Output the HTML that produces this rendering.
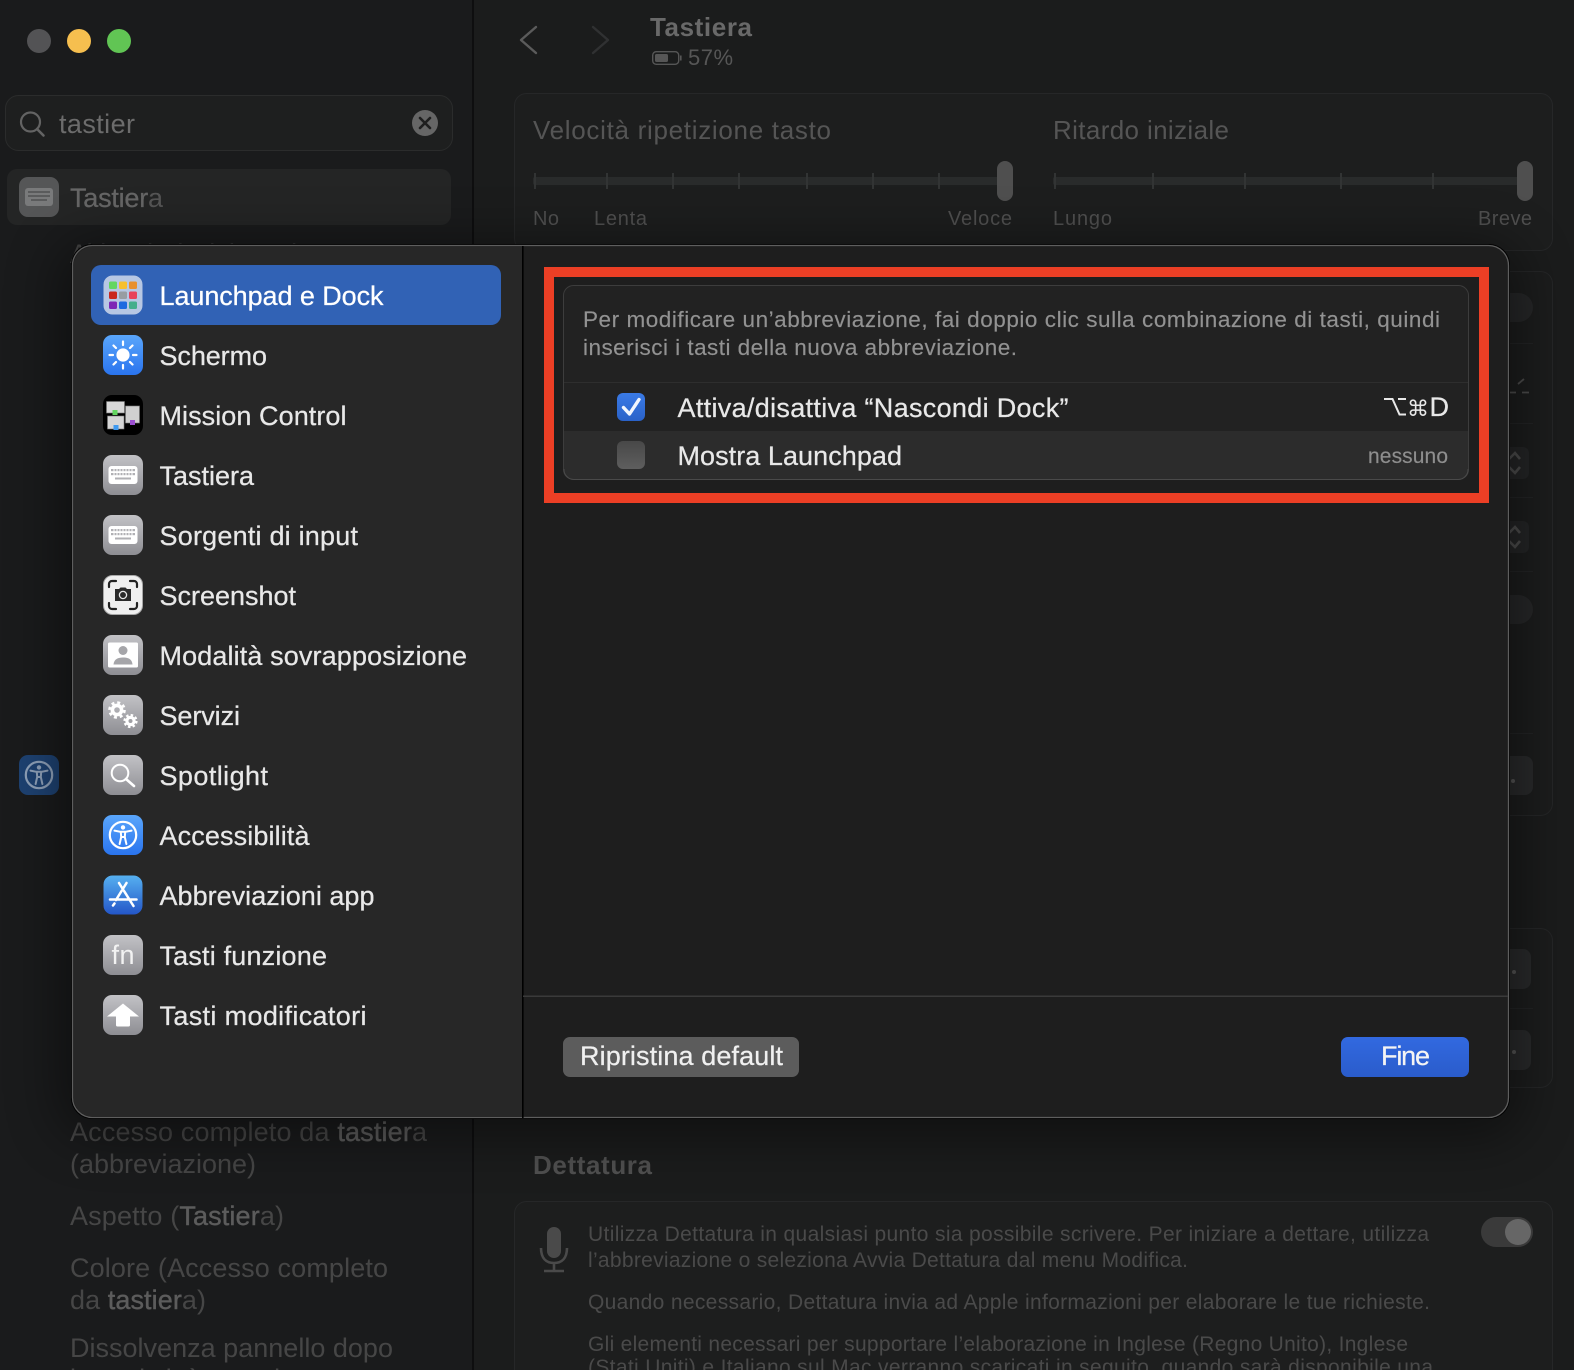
<!DOCTYPE html>
<html lang="it">
<head>
<meta charset="utf-8">
<title>Tastiera</title>
<style>
html,body{margin:0;padding:0;background:#1a1b1c;width:1574px;height:1370px;overflow:hidden}
svg{display:block}
text{font-family:"Liberation Sans",sans-serif;white-space:pre}
.m{font-size:27px;fill:#e8e8e8;stroke:#e8e8e8;stroke-width:.25px}
.s{font-size:27px;fill:#464646}
.b{fill:#5c5c5c;stroke:#5c5c5c;stroke-width:.4px}
.d{font-size:21px;fill:#4a4a4a}
.l{font-size:20px;fill:#505050}
.h{font-size:26px;fill:#555}
</style>
</head>
<body>
<svg xmlns="http://www.w3.org/2000/svg" width="1574" height="1370" viewBox="0 0 1574 1370">
<defs>
<linearGradient id="gray" x1="0" y1="0" x2="0" y2="1"><stop offset="0" stop-color="#c2c2c6"/><stop offset="1" stop-color="#8e8e93"/></linearGradient>
<linearGradient id="blue" x1="0" y1="0" x2="0" y2="1"><stop offset="0" stop-color="#5aa6fb"/><stop offset="1" stop-color="#2a74ee"/></linearGradient>
<linearGradient id="app" x1="0" y1="0" x2="0" y2="1"><stop offset="0" stop-color="#56b0f0"/><stop offset="1" stop-color="#2456c8"/></linearGradient>
<linearGradient id="cb" x1="0" y1="0" x2="0" y2="1"><stop offset="0" stop-color="#3a7ae6"/><stop offset="1" stop-color="#2a62c8"/></linearGradient>
<linearGradient id="cb2" x1="0" y1="0" x2="0" y2="1"><stop offset="0" stop-color="#484848"/><stop offset="1" stop-color="#5e5e5e"/></linearGradient>
<linearGradient id="fine" x1="0" y1="0" x2="0" y2="1"><stop offset="0" stop-color="#3269e0"/><stop offset="1" stop-color="#2a5ccb"/></linearGradient>
<filter id="shadow" x="-10%" y="-10%" width="120%" height="120%"><feGaussianBlur stdDeviation="28"/></filter>
<g id="kbd">
<rect x="5.5" y="11" width="29" height="18" rx="3" fill="#fff"/>
<g fill="#b0b0b4">
<rect x="8" y="14" width="24" height="2.2"/><rect x="8" y="18" width="24" height="2.2"/><rect x="12" y="22.500" width="16" height="2"/>
</g>
<g fill="#fff">
<rect x="10.5" y="13" width="1" height="8"/><rect x="13.5" y="13" width="1" height="8"/><rect x="16.5" y="13" width="1" height="8"/><rect x="19.5" y="13" width="1" height="8"/><rect x="22.5" y="13" width="1" height="8"/><rect x="25.5" y="13" width="1" height="8"/><rect x="28.5" y="13" width="1" height="8"/>
</g>
</g>
<g id="a11y">
<circle cx="20" cy="20" r="13.2" fill="none" stroke="#fff" stroke-width="2.2"/>
<circle cx="20" cy="12.4" r="2.2" fill="#fff"/>
<path d="M11.5 15.6 L17.4 16.8 H22.6 L28.5 15.6 M17.8 17 L18.2 22 L16.6 29 M22.2 17 L21.8 22 L23.4 29 M18.2 22 H21.8" fill="none" stroke="#fff" stroke-width="2" stroke-linecap="round" stroke-linejoin="round"/>
</g>
</defs>

<!-- background window -->
<rect width="1574" height="1370" fill="#1a1b1c"/>
<rect x="472" width="1102" height="1370" fill="#1b1c1c"/>
<rect x="472" y="0" width="2" height="1370" fill="#0e0e0f"/>

<circle cx="39" cy="41" r="12" fill="#535355"/>
<circle cx="79" cy="41" r="12" fill="#f6bf4f"/>
<circle cx="119" cy="41" r="12" fill="#61c554"/>

<rect x="5.5" y="95.5" width="447" height="55" rx="13" fill="#1e1f1f" stroke="#2b2c2c"/>
<circle cx="30.5" cy="122" r="9.5" fill="none" stroke="#636363" stroke-width="2.2"/>
<path d="M37 129 L43.5 135.5" stroke="#636363" stroke-width="2.6" stroke-linecap="round"/>
<text x="59" y="133" font-size="27" fill="#6c6c6c" textLength="76">tastier</text>
<circle cx="425" cy="123" r="13" fill="#666"/>
<path d="M420 118 L430 128 M430 118 L420 128" stroke="#1f1f1f" stroke-width="2.6" stroke-linecap="round"/>

<rect x="7" y="169" width="444" height="56" rx="10" fill="#242525"/>
<rect x="19" y="177" width="40" height="40" rx="9" fill="#555657"/>
<rect x="25" y="188" width="28" height="18" rx="3" fill="#797a7b"/>
<g fill="#5a5b5c"><rect x="28" y="191" width="22" height="2"/><rect x="28" y="195" width="22" height="2"/><rect x="31" y="199" width="16" height="2"/></g>
<text x="70" y="207" class="s" style="fill:#626262" textLength="93"><tspan fill="#666" stroke="#666" stroke-width=".3">Tastier</tspan><tspan fill="#555">a</tspan></text>
<text x="70" y="263" class="s" textLength="262">Abbreviazioni da tastiera</text>

<rect x="19" y="755" width="40" height="40" rx="9" fill="#1e4272"/>
<g transform="translate(19,755)" opacity=".5"><use href="#a11y"/></g>

<text x="70" y="1141" class="s" textLength="357">Accesso completo da <tspan class="b">tastier</tspan>a</text>
<text x="70" y="1173" class="s" textLength="186">(abbreviazione)</text>
<text x="70" y="1225" class="s" textLength="214">Aspetto (<tspan class="b">Tastier</tspan>a)</text>
<text x="70" y="1277" class="s" textLength="318">Colore (Accesso completo</text>
<text x="70" y="1309" class="s" textLength="136">da <tspan class="b">tastier</tspan>a)</text>
<text x="70" y="1357" class="s" textLength="323">Dissolvenza pannello dopo</text>
<text x="70" y="1388" class="s" textLength="260">inattività tastiera</text>

<!-- header -->
<path d="M536 27 L521 40 L536 53" fill="none" stroke="#5b5b5b" stroke-width="2.4" stroke-linejoin="round" stroke-linecap="round"/>
<path d="M593 27 L608 40 L593 53" fill="none" stroke="#303132" stroke-width="2.4" stroke-linejoin="round" stroke-linecap="round"/>
<text x="650" y="36" font-size="26" font-weight="bold" fill="#696969" textLength="102">Tastiera</text>
<rect x="652.7" y="51.7" width="26" height="12.6" rx="3.5" fill="none" stroke="#565656" stroke-width="1.4"/>
<rect x="655" y="54" width="13" height="8" rx="1.6" fill="#565656"/>
<rect x="680" y="55.5" width="1.6" height="5" fill="#565656"/>
<text x="688" y="65" font-size="22" fill="#565656" textLength="45">57%</text>

<!-- top panel -->
<rect x="514.5" y="93.5" width="1038" height="157" rx="12" fill="#1d1e1e" stroke="#262728"/>
<text x="533" y="139" class="h" textLength="298">Velocità ripetizione tasto</text>
<text x="1053" y="139" class="h" textLength="176">Ritardo iniziale</text>
<rect x="533" y="177" width="478" height="8" rx="2" fill="#292b2b"/>
<rect x="1053" y="177" width="478" height="8" rx="2" fill="#292b2b"/>
<g fill="#323434">
<rect x="534" y="173" width="2" height="16"/><rect x="606" y="173" width="2" height="16"/><rect x="672" y="173" width="2" height="16"/><rect x="738" y="173" width="2" height="16"/><rect x="806" y="173" width="2" height="16"/><rect x="872" y="173" width="2" height="16"/><rect x="938" y="173" width="2" height="16"/>
<rect x="1054" y="173" width="2" height="16"/><rect x="1152" y="173" width="2" height="16"/><rect x="1244" y="173" width="2" height="16"/><rect x="1340" y="173" width="2" height="16"/><rect x="1432" y="173" width="2" height="16"/>
</g>
<rect x="997" y="161" width="16" height="40" rx="8" fill="#4f4f4f"/>
<rect x="1517" y="161" width="16" height="40" rx="8" fill="#4f4f4f"/>
<text x="533" y="225" class="l" textLength="26">No</text>
<text x="594" y="225" class="l" textLength="53">Lenta</text>
<text x="948" y="225" class="l" textLength="64">Veloce</text>
<text x="1053" y="225" class="l" textLength="59">Lungo</text>
<text x="1478" y="225" class="l" textLength="54">Breve</text>

<!-- right side panels -->
<rect x="514.5" y="271.5" width="1038" height="544" rx="12" fill="#1c1d1d" stroke="#252627"/>
<g fill="#232425">
<rect x="1500" y="343" width="33" height="1"/><rect x="1500" y="423" width="33" height="1"/><rect x="1500" y="497" width="33" height="1"/><rect x="1500" y="571" width="33" height="1"/><rect x="1500" y="733" width="33" height="1"/>
</g>
<rect x="1460" y="293" width="73" height="29" rx="14.5" fill="#262728"/>
<rect x="1460" y="595" width="73" height="29" rx="14.5" fill="#262728"/>
<rect x="1480" y="447" width="49" height="32" rx="6" fill="#242526"/>
<rect x="1480" y="521" width="49" height="32" rx="6" fill="#242526"/>
<rect x="1460" y="756" width="73" height="39" rx="8" fill="#292a2b"/>
<circle cx="1513" cy="781" r="2" fill="#555"/>
<path d="M1509 459 L1515 453 L1520 459 M1509 467 L1515 473 L1520 467 M1509 533 L1515 527 L1520 533 M1509 541 L1515 547 L1520 541" fill="none" stroke="#4c4c4c" stroke-width="2.600"/>
<path d="M1510 392.5 H1516 M1522 392.5 H1529 M1518 384 L1524 379" stroke="#4c4c4c" stroke-width="1.8" fill="none"/>

<rect x="514.5" y="928.5" width="1038" height="159" rx="12" fill="#1c1d1d" stroke="#252627"/>
<rect x="1500" y="1008" width="33" height="1" fill="#232425"/>
<rect x="1460" y="949" width="71" height="40" rx="8" fill="#292a2b"/>
<rect x="1460" y="1030" width="71" height="40" rx="8" fill="#292a2b"/>
<circle cx="1514" cy="972" r="2" fill="#555"/>
<circle cx="1514" cy="1052" r="2" fill="#555"/>

<text x="533" y="1174" font-size="26" font-weight="bold" fill="#505050" textLength="119">Dettatura</text>
<rect x="514.5" y="1201.5" width="1038" height="200" rx="12" fill="#1d1e1e" stroke="#262728"/>
<rect x="547" y="1227" width="14" height="31" rx="7" fill="#4a4a4a"/>
<path d="M541 1248 C541 1258 546 1263 554 1263 C562 1263 567 1258 567 1248 M554 1263 V1270 M544 1271 H564" fill="none" stroke="#4a4a4a" stroke-width="2.6"/>
<text x="588" y="1241" class="d" textLength="841">Utilizza Dettatura in qualsiasi punto sia possibile scrivere. Per iniziare a dettare, utilizza</text>
<text x="588" y="1267" class="d" textLength="600">l’abbreviazione o seleziona Avvia Dettatura dal menu Modifica.</text>
<text x="588" y="1309" class="d" textLength="842">Quando necessario, Dettatura invia ad Apple informazioni per elaborare le tue richieste.</text>
<text x="588" y="1351" class="d" textLength="820">Gli elementi necessari per supportare l’elaborazione in Inglese (Regno Unito), Inglese</text>
<text x="588" y="1374" class="d" textLength="845">(Stati Uniti) e Italiano sul Mac verranno scaricati in seguito, quando sarà disponibile una</text>
<rect x="1481" y="1217" width="52" height="30" rx="15" fill="#3a3a3a"/>
<circle cx="1518" cy="1232" r="13" fill="#666"/>

<!-- modal shadow -->
<rect x="60" y="245" width="1460" height="890" rx="30" fill="#000" opacity=".45" filter="url(#shadow)"/>

<!-- modal -->
<rect x="71" y="244" width="1439" height="875" rx="21" fill="#000"/>
<rect x="72.5" y="245.5" width="1436" height="872" rx="20" fill="#1e1e1e" stroke="#5e5e5e" stroke-width="1.300"/>
<path d="M522 246.500 H93 A20 20 0 0 0 73.500 266 V1097 A20 20 0 0 0 93 1117 H522 Z" fill="#272727"/>
<rect x="522" y="246" width="1.6" height="872" fill="#000"/>

<!-- modal sidebar -->
<rect x="91" y="265" width="410" height="60" rx="10" fill="#3162b5"/>

<!-- launchpad -->
<g transform="translate(103,275)">
<rect x=".5" y=".5" width="39" height="39" rx="9" fill="#b7c7e3"/>
<rect x="6" y="6.5" width="8" height="7.5" rx="1.5" fill="#63d660"/><rect x="16" y="6.5" width="8" height="7.5" rx="1.5" fill="#f6c02f"/><rect x="26" y="6.5" width="8" height="7.5" rx="1.5" fill="#e8902e"/>
<rect x="6" y="16.5" width="8" height="7.5" rx="1.5" fill="#c9281e"/><rect x="16" y="16.5" width="8" height="7.5" rx="1.5" fill="#989da2"/><rect x="26" y="16.5" width="8" height="7.5" rx="1.5" fill="#e8435a"/>
<rect x="6" y="26.5" width="8" height="7.5" rx="1.5" fill="#7e27b5"/><rect x="16" y="26.5" width="8" height="7.5" rx="1.5" fill="#1f6ae0"/><rect x="26" y="26.5" width="8" height="7.5" rx="1.5" fill="#45ae8c"/>
</g>
<!-- schermo -->
<g transform="translate(103,335)">
<rect width="40" height="40" rx="9" fill="url(#blue)"/>
<circle cx="20" cy="20" r="6.6" fill="#fff"/>
<path d="M20 6.5 V10 M20 30 V33.5 M6.5 20 H10 M30 20 H33.5 M10.5 10.5 L13 13 M27 27 L29.5 29.5 M29.5 10.5 L27 13 M13 27 L10.5 29.5" stroke="#fff" stroke-width="2.2" stroke-linecap="round"/>
</g>
<!-- mission control -->
<g transform="translate(103,395)">
<rect width="40" height="40" rx="9" fill="#000"/>
<rect x="3.5" y="6.5" width="18" height="11.5" fill="#d8d8d8" stroke="#777" stroke-width=".6"/>
<rect x="22.5" y="11" width="14" height="17" fill="#d0d0d0" stroke="#777" stroke-width=".6"/>
<rect x="4.5" y="21" width="16.500" height="13" fill="#d6d6d6" stroke="#777" stroke-width=".6"/>
<rect x="9.500" y="15" width="5" height="5" fill="#63d660"/>
<rect x="27" y="25" width="5" height="5" fill="#9b4fd0"/>
<rect x="10.500" y="30" width="5" height="5" fill="#3f9af0"/>
</g>
<!-- tastiera -->
<g transform="translate(103,455)"><rect width="40" height="40" rx="9" fill="url(#gray)"/><use href="#kbd"/></g>
<!-- sorgenti -->
<g transform="translate(103,515)"><rect width="40" height="40" rx="9" fill="url(#gray)"/><use href="#kbd"/></g>
<!-- screenshot -->
<g transform="translate(103,575)">
<rect x=".5" y=".5" width="39" height="39" rx="9" fill="#efefef" stroke="#a8a8a8"/>
<path d="M6 12 V9 A3 3 0 0 1 9 6 H13 M27 6 H31 A3 3 0 0 1 34 9 V12 M34 28 V31 A3 3 0 0 1 31 34 H27 M13 34 H9 A3 3 0 0 1 6 31 V28" fill="none" stroke="#222" stroke-width="2.2" stroke-linecap="round"/>
<path d="M12 14 H16 L17.500 12.500 H22.500 L24 14 H28 V26 H12 Z" fill="#2a2a2a"/>
<circle cx="20" cy="20" r="3.600" fill="none" stroke="#e8e8e8" stroke-width="1.300"/>
</g>
<!-- overlay -->
<g transform="translate(103,635)">
<rect width="40" height="40" rx="9" fill="url(#gray)"/>
<rect x="5" y="7.500" width="30" height="25" rx="1.500" fill="#fff"/>
<circle cx="20" cy="15.500" r="4.500" fill="#a5a5a9"/>
<path d="M10.500 29.500 C11 24 15 22.500 20 22.500 C25 22.500 29 24 29.500 29.500 Z" fill="#a5a5a9"/>
</g>
<!-- servizi -->
<g transform="translate(103,695)">
<rect width="40" height="40" rx="9" fill="url(#gray)"/>
<circle cx="14" cy="15" r="4.600" fill="none" stroke="#fff" stroke-width="3.600"/>
<circle cx="14" cy="15" r="7.500" fill="none" stroke="#fff" stroke-width="2.600" stroke-dasharray="3 2.890"/>
<circle cx="27.500" cy="26" r="3.600" fill="none" stroke="#fff" stroke-width="3.200"/>
<circle cx="27.500" cy="26" r="6" fill="none" stroke="#fff" stroke-width="2.200" stroke-dasharray="2.500 2.210"/>
</g>
<!-- spotlight -->
<g transform="translate(103,755)">
<rect width="40" height="40" rx="9" fill="url(#gray)"/>
<circle cx="17" cy="18" r="8.300" fill="none" stroke="#fff" stroke-width="2"/>
<path d="M23 24 L31 31" stroke="#fff" stroke-width="2.600" stroke-linecap="round"/>
</g>
<!-- accessibilita -->
<g transform="translate(103,815)"><rect width="40" height="40" rx="9" fill="url(#blue)"/><use href="#a11y"/></g>
<!-- app store -->
<g transform="translate(103,875)">
<rect x=".5" y=".5" width="39" height="39" rx="9" fill="url(#app)"/>
<path d="M16 8 L30.500 31 M23.500 8 L13 25 M7 24.500 H33.500 M11.500 28.500 L10 30.500" fill="none" stroke="#fff" stroke-width="2.500" stroke-linecap="round"/>
</g>
<!-- fn -->
<g transform="translate(103,935)">
<rect width="40" height="40" rx="9" fill="url(#gray)"/>
<text x="20" y="29" font-size="27" fill="#f2f2f2" text-anchor="middle" textLength="23">fn</text>
</g>
<!-- modifier -->
<g transform="translate(103,995)">
<rect width="40" height="40" rx="9" fill="url(#gray)"/>
<path d="M20 8.500 L36 21.500 H27 V30 A1.500 1.500 0 0 1 25.500 31.500 H14.500 A1.500 1.500 0 0 1 13 30 V21.500 H4 Z" fill="#fff"/>
</g>

<text x="159.500" y="305" class="m" style="fill:#fff;stroke:#fff" textLength="224">Launchpad e Dock</text>
<text x="159.500" y="365" class="m" textLength="107.500">Schermo</text>
<text x="159.500" y="425" class="m" textLength="187">Mission Control</text>
<text x="159.500" y="485" class="m" textLength="94.500">Tastiera</text>
<text x="159.500" y="545" class="m" textLength="198.500">Sorgenti di input</text>
<text x="159.500" y="605" class="m" textLength="136.500">Screenshot</text>
<text x="159.500" y="665" class="m" textLength="307.500">Modalità sovrapposizione</text>
<text x="159.500" y="725" class="m" textLength="80.500">Servizi</text>
<text x="159.500" y="785" class="m" textLength="108.500">Spotlight</text>
<text x="159.500" y="845" class="m" textLength="150">Accessibilità</text>
<text x="159.500" y="905" class="m" textLength="215">Abbreviazioni app</text>
<text x="159.500" y="965" class="m" textLength="167.500">Tasti funzione</text>
<text x="159.500" y="1025" class="m" textLength="207">Tasti modificatori</text>

<!-- highlighted box -->
<rect x="549" y="272" width="935" height="226" fill="none" stroke="#ec3f25" stroke-width="10"/>
<rect x="563.500" y="285.500" width="905" height="194" rx="10" fill="#222" stroke="#3d3d3d"/>
<rect x="564" y="382" width="904" height="1" fill="#2e2e2e"/>
<path d="M564 431 H1468 V469 A10 10 0 0 1 1458 479 H574 A10 10 0 0 1 564 469 Z" fill="#2c2c2c"/>
<path d="M564 469 A10 10 0 0 0 574 479.500 H1458 A10 10 0 0 0 1468 469" fill="none" stroke="#4a4a4a"/>

<text x="583" y="327" font-size="22.500" fill="#929292" stroke="#929292" stroke-width=".15" textLength="857">Per modificare un’abbreviazione, fai doppio clic sulla combinazione di tasti, quindi</text>
<text x="583" y="355" font-size="22.500" fill="#929292" stroke="#929292" stroke-width=".15" textLength="434">inserisci i tasti della nuova abbreviazione.</text>

<rect x="617" y="393" width="28" height="28" rx="6" fill="url(#cb)"/>
<path d="M623.500 407.500 L629.500 414 L639 399.500" fill="none" stroke="#f2f6fd" stroke-width="3.400" stroke-linecap="round" stroke-linejoin="round"/>
<rect x="617" y="441" width="28" height="28" rx="6" fill="url(#cb2)"/>

<text x="677.500" y="417" class="m" textLength="391">Attiva/disattiva “Nascondi Dock”</text>
<text x="677.500" y="465" class="m" textLength="224.500">Mostra Launchpad</text>
<path d="M1384 399 H1392.500 L1399.500 414.500 H1406 M1398 399 H1406" fill="none" stroke="#e8e8e8" stroke-width="2"/>
<text x="1407" y="416" font-size="22" fill="#e8e8e8" style="font-family:'DejaVu Sans',sans-serif" textLength="21">⌘</text>
<text x="1429.500" y="416" class="m" textLength="18.500">D</text>
<text x="1368" y="463" font-size="21" fill="#8e8e8e" stroke="#8e8e8e" stroke-width=".15" textLength="80">nessuno</text>

<!-- footer -->
<rect x="523" y="995.500" width="985" height="1.500" fill="#3a3a3a"/>
<rect x="563" y="1037" width="236" height="40" rx="7" fill="#5c5c5c"/>
<text x="580" y="1065" class="m" style="fill:#f0f0f0;stroke:#f0f0f0" textLength="203">Ripristina default</text>
<rect x="1341" y="1037" width="128" height="40" rx="7" fill="url(#fine)"/>
<text x="1381" y="1065" class="m" style="fill:#f4f4f4;stroke:#f4f4f4" textLength="49">Fine</text>
</svg>
</body>
</html>
